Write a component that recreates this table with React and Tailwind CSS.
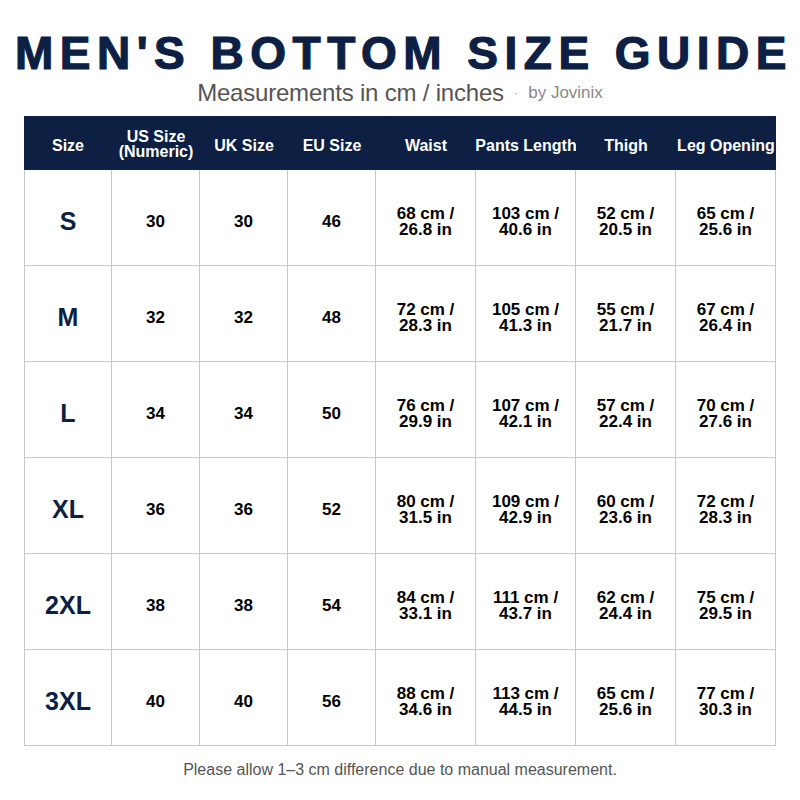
import React from "react";

const rows = [
  ["S", "30", "30", "46", ["68 cm /", "26.8 in"], ["103 cm /", "40.6 in"], ["52 cm /", "20.5 in"], ["65 cm /", "25.6 in"]],
  ["M", "32", "32", "48", ["72 cm /", "28.3 in"], ["105 cm /", "41.3 in"], ["55 cm /", "21.7 in"], ["67 cm /", "26.4 in"]],
  ["L", "34", "34", "50", ["76 cm /", "29.9 in"], ["107 cm /", "42.1 in"], ["57 cm /", "22.4 in"], ["70 cm /", "27.6 in"]],
  ["XL", "36", "36", "52", ["80 cm /", "31.5 in"], ["109 cm /", "42.9 in"], ["60 cm /", "23.6 in"], ["72 cm /", "28.3 in"]],
  ["2XL", "38", "38", "54", ["84 cm /", "33.1 in"], ["111 cm /", "43.7 in"], ["62 cm /", "24.4 in"], ["75 cm /", "29.5 in"]],
  ["3XL", "40", "40", "56", ["88 cm /", "34.6 in"], ["113 cm /", "44.5 in"], ["65 cm /", "25.6 in"], ["77 cm /", "30.3 in"]],
];

export default function App() {
  return (
    <div className="w-[800px] h-[800px] bg-white flex flex-col items-center" style={{ fontFamily: '"Liberation Sans", Arial, sans-serif' }}>
      <h1 className="mt-[28px] pl-[8px] h-[50px] flex items-center text-[46px] font-bold text-[#0d1f42] tracking-[6.5px] leading-none whitespace-nowrap [-webkit-text-stroke:1.2px_#0d1f42]">
        MEN'S BOTTOM SIZE GUIDE
      </h1>
      <div className="mt-[1px] h-[28px] flex items-center whitespace-nowrap">
        <span className="text-[24px] text-[#555555] tracking-[-0.2px]">Measurements in cm / inches</span>
        <span className="ml-[10px] text-[13px] text-[#aaaaaa]">·</span>
        <span className="ml-[10px] text-[17px] text-[#888888]">by Jovinix</span>
      </div>
      <div className="mt-[9px] w-[752px] grid grid-cols-[88px_88px_88px_88px_100px_100px_100px_100px]">
        {["Size", null, "UK Size", "EU Size", "Waist", "Pants Length", "Thigh", "Leg Opening"].map((h, i) => (
          <div key={i} className="h-[54px] pt-[4px] bg-[#0d1f42] text-white font-bold text-[16px] flex items-center justify-center text-center leading-[15px] whitespace-nowrap">
            {h === null ? (
              <span className="-mt-[3px]">US Size<br />(Numeric)</span>
            ) : (
              h
            )}
          </div>
        ))}
        {rows.map((r, ri) =>
          r.map((c, ci) => (
            <div
              key={ri + "-" + ci}
              className={
                "h-[96px] pt-[9px] border-b border-r border-[#c8c8c8] flex items-center justify-center text-center font-bold " +
                (ci === 0 ? "border-l text-[25px] text-[#0d1f42] " : "text-[17px] text-black ")
              }
            >
              {Array.isArray(c) ? (
                <span className="leading-[16px]">{c[0]}<br />{c[1]}</span>
              ) : (
                c
              )}
            </div>
          ))
        )}
      </div>
      <div className="mt-[12px] text-[16px] text-[#555555]">Please allow 1–3 cm difference due to manual measurement.</div>
    </div>
  );
}
